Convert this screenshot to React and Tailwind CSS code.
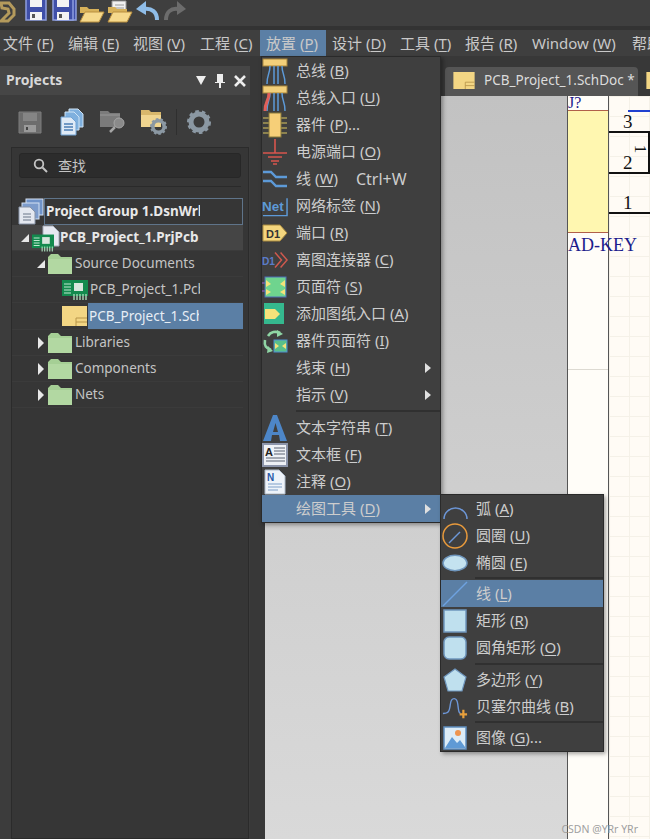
import React from 'react'

const FONT = "font-['Noto_Sans','Noto_Sans_CJK_SC',sans-serif]"

const Hot = ({ t, k, after }) => (
  <span className="whitespace-pre">{t} (<span className="underline underline-offset-2">{k}</span>){after}</span>
)

// toolbar icons
const Logo = () => (
  <svg width="16" height="24" viewBox="0 0 16 24"><path d="M1 3 L9 3 L14 9 L14 15 L8 21 L1 21 L6 16 L9 13 L8 9 L2 8Z" fill="none" stroke="#b49a5c" strokeWidth="3" /></svg>
)
const Floppy = ({ x = 0 }) => (
  <g transform={`translate(${x} 0)`}>
    <path d="M1 -2H21V21H1Z" fill="#3f4fa8" stroke="#8f9fe0" strokeWidth="1.5" />
    <rect x="5" y="-2" width="12" height="10" fill="#f3f3f3" />
    <rect x="5" y="13" width="12" height="8" fill="#f3f3f3" />
    <rect x="7" y="15" width="3" height="4" fill="#555" />
  </g>
)
const Save = () => <svg width="23" height="23" viewBox="0 0 23 23" className="overflow-hidden"><Floppy /></svg>
const SaveAll = () => (
  <svg width="25" height="23" viewBox="0 0 25 23"><Floppy x={3} /><Floppy x={0} /></svg>
)
const FolderOpen = ({ doc }) => (
  <svg width="26" height="24" viewBox="0 0 26 24">
    {doc && <path d="M5 1H19V14H5Z" fill="#f1f1f1" stroke="#999" />}
    {doc && <path d="M8 5H17M8 8H17M8 11H17" stroke="#9a9a9a" />}
    <path d="M1 7H8L10 9H20V13H1Z" fill="#d8b25a" />
    <path d="M1 22L6 12H25L20 22Z" fill="#f6d98c" stroke="#b98f3e" />
  </svg>
)
const Undo = () => (
  <svg width="26" height="22" viewBox="0 0 26 22"><path d="M22 20C22 12 17 8 9 9" fill="none" stroke="#8fbde8" strokeWidth="4" /><path d="M11 1L1 9L11 15Z" fill="#8fbde8" /></svg>
)
const Redo = () => (
  <svg width="24" height="22" viewBox="0 0 24 22"><path d="M3 20C3 12 8 8 15 9" fill="none" stroke="#6c6c6c" strokeWidth="4" /><path d="M14 1L23 9L14 15Z" fill="#6c6c6c" /></svg>
)

// panel toolbar icons
const GraySave = () => (
  <svg width="24" height="24" viewBox="0 0 24 24"><path d="M1 2H23V23H1Z" fill="#6d6d6d" stroke="#7d7d7d" /><rect x="5" y="3" width="14" height="8" fill="#858585" /><rect x="6" y="15" width="12" height="7" fill="#9a9a9a" /><rect x="8" y="17" width="2" height="3" fill="#444" /></svg>
)
const Docs = () => (
  <svg width="24" height="28" viewBox="0 0 24 28"><path d="M9 1H18L23 6V19H9Z" fill="#7fb0de" stroke="#cfe3f5" /><path d="M5 4H14L19 9V22H5Z" fill="#7fb0de" stroke="#cfe3f5" /><path d="M1 9H11L16 14V27H1Z" fill="#dfeaf6" stroke="#6fa3d6" /><path d="M4 16H13M4 19H13M4 22H13" stroke="#4d7fb5" strokeWidth="1.3" /></svg>
)
const FolderSearch = () => (
  <svg width="27" height="24" viewBox="0 0 27 24"><path d="M1 1H9L11 3H21V17H1Z" fill="#7b7b7b" /><path d="M1 5H21" stroke="#999" /><circle cx="20" cy="13" r="5" fill="#8a8a8a" stroke="#a5a5a5" /><path d="M16 17L11 22" stroke="#a5a5a5" strokeWidth="2.5" /></svg>
)
const Gear = ({ s = 24 }) => (
  <svg width={s} height={s} viewBox="0 0 24 24">
    <circle cx="12" cy="12" r="8" fill="none" stroke="#8b98a3" strokeWidth="5" />
    <circle cx="12" cy="12" r="10.5" fill="none" stroke="#8b98a3" strokeWidth="3" strokeDasharray="3.5 3" />
  </svg>
)
const FolderGear = () => (
  <svg width="28" height="27" viewBox="0 0 28 27">
    <path d="M1 1H9L11 3H21V18H1Z" fill="#d8b76c" /><path d="M1 6H21V18H1Z" fill="#f0d590" />
    <g transform="translate(10 9)"><Gear s={17} /></g>
  </svg>
)

// tree icons
const GreenFolder = () => (
  <svg width="25" height="20" viewBox="0 0 25 20"><path d="M0 3L3 0H10L13 3H24V20H0Z" fill="#a5cf95" /><path d="M0 5H24V20H0Z" fill="#b2d8a2" /></svg>
)
const Chip = ({ w = 26 }) => (
  <svg width={w} height="20" viewBox="0 0 26 20">
    <rect x="0" y="0" width="26" height="16" fill="#138a4e" />
    <path d="M2 4H9M2 7H9M2 10H9M2 13H9" stroke="#bfe8cf" strokeWidth="1.2" />
    <rect x="12" y="3" width="9" height="8" fill="#d8e6dd" />
    <path d="M12 14V20M15 14V20M18 14V20M21 14V20M24 14V20" stroke="#a5d8b5" strokeWidth="1.4" />
  </svg>
)
const SchDoc = ({ w = 25, h = 20 }) => (
  <svg width={w} height={h} viewBox="0 0 25 20" className="shrink-0"><rect width="25" height="20" fill="#f3d684" /><path d="M14 20V12H25M14 16H25" fill="none" stroke="#b8964a" /></svg>
)
const GroupIcon = () => (
  <svg width="27" height="27" viewBox="0 0 27 27">
    <rect x="9" y="1" width="17" height="16" fill="#6f93c9" stroke="#d5e2f3" />
    <rect x="5" y="5" width="17" height="16" fill="#7d9ccc" stroke="#d5e2f3" />
    <path d="M2 9H13L18 14V26H2Z" fill="#e4e8f0" stroke="#8894a8" />
    <path d="M6 16H14M6 19H14M6 22H14" stroke="#6b7688" />
  </svg>
)
const ArrowOpen = () => <svg width="10" height="10" viewBox="0 0 10 10"><path d="M9 1V9H1Z" fill="#e8e8e8" /></svg>
const ArrowClosed = () => <svg width="8" height="14" viewBox="0 0 8 14"><path d="M1 1L7 7L1 13Z" fill="#e8e8e8" /></svg>

// place menu icons
const BusIco = ({ entry }) => (
  <svg width="26" height="26" viewBox="0 0 26 26">
    <rect x="1" y="1" width="24" height="7" fill="#f2cf7a" stroke="#a8853c" />
    <path d="M8 8C8 16 5 16 5 26M12 8V26M16 8V26M20 8C20 16 23 16 23 26" fill="none" stroke="#5d9ad8" strokeWidth="1.5" />
    {entry && <path d="M7 8C7 16 3 16 3 26" fill="none" stroke="#e0605a" strokeWidth="3" />}
  </svg>
)
const PartIco = () => (
  <svg width="26" height="26" viewBox="0 0 26 26"><path d="M1 6H25M1 11H25M1 16H25M1 21H25" stroke="#a89a55" strokeWidth="1.5" /><rect x="7" y="1" width="12" height="24" fill="#f6cf78" stroke="#8a7a3a" /></svg>
)
const PowerIco = () => (
  <svg width="26" height="26" viewBox="0 0 26 26"><path d="M13 0V14M1 14H25M6 18H20M9 22H17M11 25H15" stroke="#d8564e" strokeWidth="1.6" /></svg>
)
const WireIco = () => (
  <svg width="26" height="26" viewBox="0 0 26 26"><path d="M1 6H9L14 11H25M1 15H9L14 20H25" fill="none" stroke="#5d9ad8" strokeWidth="2.4" /></svg>
)
const NetIco = () => (
  <svg width="27" height="24" viewBox="0 0 27 24"><path d="M1 22H26V4" fill="none" stroke="#5d9ad8" strokeWidth="1.5" /><text x="0" y="17" fontSize="14" fontWeight="700" fill="#5d9ad8" fontFamily="'Liberation Sans',sans-serif">Net</text></svg>
)
const PortIco = () => (
  <svg width="26" height="20" viewBox="0 0 26 20"><path d="M1 2H18L25 10L18 18H1Z" fill="#f4d67e" stroke="#a98a3e" /><text x="4" y="15" fontSize="11" fontWeight="700" fill="#333" fontFamily="'Liberation Sans',sans-serif">D1</text></svg>
)
const OffIco = () => (
  <svg width="28" height="20" viewBox="0 0 28 20"><text x="0" y="15" fontSize="11" fontWeight="700" fill="#5a7cc8" fontFamily="'Liberation Sans',sans-serif">D1</text><path d="M14 2L21 10L14 18M20 2L27 10L20 18" fill="none" stroke="#d0594e" strokeWidth="1.6" /></svg>
)
const SheetIco = () => (
  <svg width="26" height="22" viewBox="0 0 26 22"><path d="M0 7H4M0 15H4" stroke="#a060d0" /><rect x="3" y="1" width="21" height="20" fill="#6fd48e" stroke="#4f6fb8" /><path d="M4 4L9 8L4 11ZM4 13L9 16L4 19ZM23 4L18 8L23 11ZM23 13L18 16L23 19Z" fill="#f4e27a" /></svg>
)
const EntryIco = () => (
  <svg width="22" height="22" viewBox="0 0 22 22"><rect width="20" height="21" fill="#35b88e" /><path d="M1 6H11L16 11L11 16H1Z" fill="#f5e27a" /></svg>
)
const PartSheetIco = () => (
  <svg width="26" height="26" viewBox="0 0 26 26"><path d="M6 8A9 9 0 0 1 18 5M3 12C2 18 4 20 9 22" fill="none" stroke="#8fd5a5" strokeWidth="2.6" /><path d="M15 2L21 6L15 9ZM6 18L11 23L5 25Z" fill="#8fd5a5" /><rect x="12" y="12" width="13" height="12" fill="#59c08a" stroke="#4f8fd0" /><path d="M13 15L17 18L13 21ZM24 15L20 18L24 21Z" fill="#f4e27a" /></svg>
)
const BigA = () => (
  <svg width="26" height="28" viewBox="0 0 26 28"><path d="M1 27H9L10 21H17L18 27H25L15 1H11ZM11 18L13.5 9L16 18Z" fill="#4d86c8" fillRule="evenodd" /></svg>
)
const TextFrameIco = () => (
  <svg width="26" height="24" viewBox="0 0 26 24"><rect x="1" y="1" width="24" height="22" fill="#eef1f6" stroke="#8c95ab" strokeWidth="2" /><text x="3" y="13" fontSize="11" fontWeight="700" fill="#222" fontFamily="'Liberation Sans',sans-serif">A</text><path d="M12 5H23M12 8H23M12 11H23M4 15H23M4 18H23" stroke="#5a6272" /></svg>
)
const NoteIco = () => (
  <svg width="22" height="26" viewBox="0 0 22 26"><path d="M1 1H15L21 7V25H1Z" fill="#eef3f9" stroke="#b0bccb" /><text x="3" y="12" fontSize="10" fontWeight="700" fill="#2a5aa8" fontFamily="'Liberation Sans',sans-serif">N</text><path d="M4 15H18M4 18H18M4 21H14" stroke="#7f9fc8" /></svg>
)

// drawing tools icons
const ArcIco = () => <svg width="26" height="22" viewBox="0 0 26 22"><path d="M2 21A11.500 11 0 0 1 25 21" fill="none" stroke="#6d97d8" strokeWidth="1.5" /></svg>
const CircleIco = () => <svg width="26" height="26" viewBox="0 0 26 26"><circle cx="13" cy="13" r="12" fill="none" stroke="#e89a3c" strokeWidth="1.5" /><path d="M7 20L18 9" stroke="#6d97d8" strokeWidth="1.5" /></svg>
const EllipseIco = () => <svg width="27" height="18" viewBox="0 0 27 18"><ellipse cx="13.500" cy="9" rx="12.500" ry="8" fill="#c4e2f0" stroke="#6f96bd" strokeWidth="1.5" /></svg>
const LineIco = () => <svg width="26" height="26" viewBox="0 0 26 26"><path d="M1 25L25 1" stroke="#6ea2e0" strokeWidth="1.5" /></svg>
const RectIco = () => <svg width="24" height="24" viewBox="0 0 24 24"><rect x="1" y="1" width="22" height="22" fill="#bfe0ee" stroke="#6f96bd" strokeWidth="1.5" /></svg>
const RoundIco = () => <svg width="24" height="24" viewBox="0 0 24 24"><rect x="1" y="1" width="22" height="22" rx="5" fill="#bfe0ee" stroke="#6f96bd" strokeWidth="1.5" /></svg>
const PolyIco = () => <svg width="24" height="24" viewBox="0 0 24 24"><path d="M12 1L23 9L19 23H5L1 9Z" fill="#bfe0ee" stroke="#6f96bd" strokeWidth="1.2" /></svg>
const BezierIco = () => (
  <svg width="28" height="26" viewBox="0 0 28 26"><path d="M1 20C7 20 8 18 9 10C10 2 16 2 17 10C18 18 18 19 20 20" fill="none" stroke="#6d97d8" strokeWidth="1.5" /><path d="M23 16V25M19 21H27" stroke="#e8a03c" strokeWidth="2.4" /></svg>
)
const ImageIco = () => (
  <svg width="24" height="24" viewBox="0 0 24 24"><rect x="1" y="1" width="22" height="22" fill="#dcecf7" stroke="#5f8fc0" strokeWidth="1.5" /><circle cx="15" cy="7" r="3" fill="#ee9550" /><path d="M2 22L9 11L14 17L17 14L22 21V22Z" fill="#5f9ad5" /></svg>
)

const PLACE_ITEMS = [
  { icon: <BusIco />, t: '总线', k: 'B' },
  { icon: <BusIco entry />, t: '总线入口', k: 'U' },
  { icon: <PartIco />, t: '器件', k: 'P', after: '...' },
  { icon: <PowerIco />, t: '电源端口', k: 'O' },
  { icon: <WireIco />, t: '线', k: 'W', shortcut: 'Ctrl+W' },
  { icon: <NetIco />, t: '网络标签', k: 'N' },
  { icon: <PortIco />, t: '端口', k: 'R' },
  { icon: <OffIco />, t: '离图连接器', k: 'C' },
  { icon: <SheetIco />, t: '页面符', k: 'S' },
  { icon: <EntryIco />, t: '添加图纸入口', k: 'A' },
  { icon: <PartSheetIco />, t: '器件页面符', k: 'I' },
  { t: '线束', k: 'H', sub: true },
  { t: '指示', k: 'V', sub: true },
  { sep: 6 },
  { icon: <BigA />, t: '文本字符串', k: 'T' },
  { icon: <TextFrameIco />, t: '文本框', k: 'F' },
  { icon: <NoteIco />, t: '注释', k: 'O' },
  { t: '绘图工具', k: 'D', sub: true, active: true },
]

const DRAW_ITEMS = [
  { icon: <ArcIco />, t: '弧', k: 'A' },
  { icon: <CircleIco />, t: '圆圈', k: 'U' },
  { icon: <EllipseIco />, t: '椭圆', k: 'E' },
  { sep: 4 },
  { icon: <LineIco />, t: '线', k: 'L', active: true },
  { icon: <RectIco />, t: '矩形', k: 'R' },
  { icon: <RoundIco />, t: '圆角矩形', k: 'O' },
  { sep: 5 },
  { icon: <PolyIco />, t: '多边形', k: 'Y' },
  { icon: <BezierIco />, t: '贝塞尔曲线', k: 'B' },
  { sep: 4 },
  { icon: <ImageIco />, t: '图像', k: 'G', after: '...' },
]

function MenuRow({ item, inset }) {
  if (item.sep) {
    return (
      <div className={`flex items-center pl-[34px] ${item.sep === 6 ? 'h-[6px]' : item.sep === 5 ? 'h-[5px]' : 'h-[4px]'}`}>
        <div className="h-[2px] w-full bg-[#303030]" />
      </div>
    )
  }
  return (
    <div className={`h-[27px] flex items-center text-[15px] leading-none text-[#cdcdcd] ${item.active ? 'bg-[#5b7fa5]' : ''}`}>
      <div className={`h-full shrink-0 flex items-center ${inset ? 'w-[35px] pl-[1px]' : 'w-[34px]'}`}>
        <div className="w-[26px] flex justify-center">{item.icon}</div>
      </div>
      <Hot t={item.t} k={item.k} after={item.after} />
      {item.shortcut && <span className="ml-[18px] text-[16px]">{item.shortcut}</span>}
      {item.sub && <span className="ml-auto mr-[9px] w-0 h-0 border-y-[5px] border-y-transparent border-l-[6px] border-l-[#e0e0e0]" />}
    </div>
  )
}

function TreeRow({ indent, arrow, icon, label, tall, selected, wide }) {
  return (
    <div className={`flex items-center border-b border-[#3b3b3b] ${tall ? 'h-[27px]' : 'h-[26px]'}`} style={{ paddingLeft: indent }}>
      <div className="w-[14px] shrink-0 flex items-center justify-center">{arrow}</div>
      <div className="shrink-0 flex items-center">{icon}</div>
      <div className={`ml-[1px] pl-[1px] h-full flex-1 min-w-0 flex items-center ${selected ? 'bg-[#5b7fa5]' : ''}`}>
        <span className={`block overflow-hidden whitespace-nowrap text-[13.5px] ${wide ? 'w-[130px]' : 'w-[110px]'} ${selected ? 'text-[#e8eef5]' : 'text-[#c4c4c4]'}`}>{label}</span>
      </div>
    </div>
  )
}

function ProjectsPanel() {
  return (
    <div className="w-[250px] flex flex-col bg-[#3c3c3c] mt-[10px]">
      <div className="h-[29px] bg-[#464646] flex items-center pl-[6px] pr-[4px]">
        <span className="text-[14px] font-bold text-[#d8d8d8] -mt-[2px]">Projects</span>
        <span className="ml-auto w-0 h-0 border-x-[5.500px] border-x-transparent border-t-[9px] border-t-[#eeeeee]" />
        <svg width="12" height="14" viewBox="0 0 12 14" className="ml-[8px]"><path d="M3 0H9V8H11V9H7V14H5V9H1V8H3Z" fill="#eeeeee" /></svg>
        <svg width="12" height="12" viewBox="0 0 12 12" className="ml-[8px]"><path d="M1 1L11 11M11 1L1 11" stroke="#eeeeee" strokeWidth="2.600" /></svg>
      </div>
      <div className="h-[52px] flex items-center pl-[18px] pt-[2px]">
        <GraySave />
        <div className="ml-[18px]"><Docs /></div>
        <div className="ml-[15px]"><FolderSearch /></div>
        <div className="ml-[14px]"><FolderGear /></div>
        <div className="ml-[8px] w-px h-[26px] bg-[#2f2f2f]" />
        <div className="ml-[10px]"><Gear /></div>
      </div>
      <div className="flex-1 ml-[11px] mr-px bg-[#363636] border border-[#2b2b2b] pt-[5px] pl-[7px] pr-[7px]">
        <div className="h-[25px] rounded-[3px] bg-[#2c2c2c] border border-[#272727] flex items-center pl-[13px]">
          <svg width="15" height="15" viewBox="0 0 15 15"><circle cx="6" cy="6" r="4.300" fill="none" stroke="#c4c4c4" strokeWidth="1.800" /><path d="M9.500 9.500L14 14" stroke="#c4c4c4" strokeWidth="2" /></svg>
          <span className="ml-[10px] text-[14px] text-[#c4c4c4]">查找</span>
        </div>
        <div className="h-px bg-[#2a2a2a] mt-[8px]" />
        <div className="-ml-[7px] -mr-[6px] mt-[11px] pr-[4px]">
          <div className="h-[27px] flex items-center pl-[5px]">
            <GroupIcon />
            <div className="h-full flex-1 border border-[#5f748a] flex items-center">
              <span className="block overflow-hidden whitespace-nowrap w-[155px] pl-[1px] text-[13.5px] font-bold text-[#e8e8e8]">Project Group 1.DsnWrk</span>
            </div>
          </div>
          <div className="h-[26px] bg-[#454545] flex items-center pl-[8px] border-b border-[#3b3b3b]">
            <ArrowOpen />
            <div className="ml-[2px] relative w-[26px] h-[26px] shrink-0">
              <svg width="18" height="22" viewBox="0 0 18 22" className="absolute left-[10px] top-0"><path d="M1 1H11L17 7V21H1Z" fill="#e6e8f0" stroke="#a5adbb" /></svg>
              <div className="absolute left-0 top-[8px]"><Chip w={22} /></div>
            </div>
            <span className="ml-[2px] text-[13.5px] font-bold text-[#e8e8e8] whitespace-nowrap">PCB_Project_1.PrjPcb</span>
          </div>
          <TreeRow indent={22} arrow={<ArrowOpen />} icon={<GreenFolder />} label="Source Documents" wide />
          <TreeRow indent={36} icon={<Chip />} label="PCB_Project_1.PcbDoc" />
          <TreeRow indent={36} icon={<SchDoc />} label="PCB_Project_1.SchDoc" selected tall />
          <TreeRow indent={22} arrow={<ArrowClosed />} icon={<GreenFolder />} label="Libraries" />
          <TreeRow indent={22} arrow={<ArrowClosed />} icon={<GreenFolder />} label="Components" />
          <TreeRow indent={22} arrow={<ArrowClosed />} icon={<GreenFolder />} label="Nets" />
        </div>
      </div>
    </div>
  )
}

function Canvas() {
  return (
    <div className="flex-1 flex min-h-0 relative overflow-hidden">
      <div className="w-[302px] bg-gradient-to-b from-[#c2c2c2] to-[#d9d9d9]" />
      <div className="w-[42px] bg-[#fffdf8] border-x border-x-[#555555] flex flex-col">
        <div className="h-[14px] leading-[14px] text-[16px] text-[#1c1c8c] font-['Liberation_Serif',serif] whitespace-nowrap">J?</div>
        <div className="h-[123px] bg-[#fff7b0] border-y border-[#b0604a]" />
        <div className="h-[137px] border-b border-b-[#dddad2]" />
      </div>
      <div className="flex-1 bg-[#fffbf5] bg-[linear-gradient(#f5f1e8_1px,transparent_1px),linear-gradient(90deg,#f5f1e8_1px,transparent_1px)] bg-[size:20px_20px]" />
      {/* schematic symbol, placed on the sheet */}
      <div className="absolute left-[303px] top-[140px] text-[18px] leading-none text-[#1c1c8c] font-['Liberation_Serif',serif] whitespace-nowrap">AD-KEY</div>
      <div className="absolute left-[363px] top-[14px] w-[22px] h-[2px] bg-[#2040d0]" />
      <div className="absolute left-[344px] top-[35px] w-[42px] h-[2px] bg-[#111]" />
      <div className="absolute left-[344px] top-[76px] w-[42px] h-[2px] bg-[#111]" />
      <div className="absolute left-[344px] top-[116px] w-[42px] h-[2px] bg-[#111]" />
      <div className="absolute left-[383px] top-[35px] w-[2px] h-[42px] bg-[#111]" />
      <span className="absolute left-[358px] top-[16px] text-[19px] leading-[19px] text-[#111] font-['Liberation_Serif',serif]">3</span>
      <span className="absolute left-[358px] top-[57px] text-[19px] leading-[19px] text-[#111] font-['Liberation_Serif',serif]">2</span>
      <span className="absolute left-[358px] top-[97px] text-[19px] leading-[19px] text-[#111] font-['Liberation_Serif',serif]">1</span>
      <span className="absolute left-[371px] top-[46px] rotate-90 text-[17px] leading-[14px] text-[#111] font-['Liberation_Serif',serif]">1</span>
      <span className="absolute right-[12px] bottom-[5px] text-[10.5px] leading-none text-[#a0a0a0]">CSDN @YRr YRr</span>
    </div>
  )
}

const MENUS = [
  ['文件', 'F', 'w-[65px]'], ['编辑', 'E', 'w-[65px]'], ['视图', 'V', 'w-[67px]'], ['工程', 'C', 'w-[60px]'],
  ['放置', 'P', 'w-[66px] mr-[6px] pl-[6px]', true], ['设计', 'D', 'w-[68px]'], ['工具', 'T', 'w-[65px]'], ['报告', 'R', 'w-[67px]'],
  ['Window', 'W', 'w-[100px]'],
]

export default function App() {
  return (
    <div className={`relative w-[650px] h-[839px] overflow-hidden flex flex-col bg-[#383838] ${FONT}`}>
      <div className="h-[26px] bg-[#3f3f3f] flex items-start overflow-hidden shrink-0">
        <Logo />
        <div className="ml-[9px] -mt-[1px]"><Save /></div>
        <div className="ml-[4px] -mt-[1px]"><SaveAll /></div>
        <div className="ml-[2px]"><FolderOpen /></div>
        <div className="ml-[2px]"><FolderOpen doc /></div>
        <div className="ml-[2px]"><Undo /></div>
        <div className="ml-[2px]"><Redo /></div>
      </div>
      <div className="h-[4px] bg-[#333333] shrink-0" />
      <div className="h-[26px] bg-[#3f3f3f] flex items-center pl-[3px] overflow-hidden shrink-0 text-[15px] text-[#c9c9c9]">
        {MENUS.map(([t, k, w, active]) => (
          <div key={t} className={`${w} shrink-0 h-full pt-[1px] flex items-center ${active ? 'bg-[#5b7fa5]' : ''}`}>
            <Hot t={t} k={k} />
          </div>
        ))}
        <span className="whitespace-nowrap pt-[1px]">帮助</span>
      </div>
      <div className="flex-1 flex min-h-0">
        <ProjectsPanel />
        <div className="w-[15px] shrink-0" />
        <div className="flex-1 flex flex-col min-w-0">
          <div className="h-[40px] shrink-0 flex items-end pl-[180px] overflow-hidden bg-[#383838]">
            <div className="w-[193px] h-[29px] shrink-0 bg-[#555555] rounded-t-[4px] flex items-center pl-[7px] pb-[2px]">
              <SchDoc w={24} h={17} />
              <span className="ml-[8px] text-[13.5px] text-[#dcdcdc] whitespace-nowrap">PCB_Project_1.SchDoc *</span>
            </div>
            <div className="ml-[7px] shrink-0 mb-[7px]"><SchDoc w={24} h={17} /></div>
          </div>
          <Canvas />
        </div>
      </div>

      {/* open menus */}
      <div className="absolute left-[261px] top-[56px] w-[180px] bg-[#3f3f3f] border border-[#2a2a2a] shadow-[2px_2px_4px_rgba(0,0,0,0.35)]">
        {PLACE_ITEMS.map((item, i) => <MenuRow key={i} item={item} />)}
      </div>
      <div className="absolute left-[440px] top-[494px] w-[164px] bg-[#3f3f3f] border border-[#2a2a2a] shadow-[2px_2px_4px_rgba(0,0,0,0.35)]">
        {DRAW_ITEMS.map((item, i) => <MenuRow key={i} item={item} inset />)}
      </div>
    </div>
  )
}
